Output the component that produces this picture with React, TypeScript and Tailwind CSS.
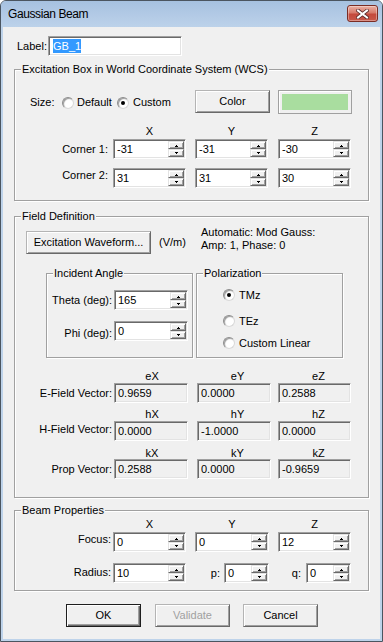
import React from "react";

const sunkenWhite =
  "bg-white border border-t-[#a0a0a0] border-l-[#a0a0a0] border-r-white border-b-white shadow-[inset_1px_1px_0_#696969,inset_-1px_-1px_0_#e3e3e3]";
const sunkenGray =
  "bg-[#f0f0f0] border border-t-[#a0a0a0] border-l-[#a0a0a0] border-r-white border-b-white shadow-[inset_1px_1px_0_#696969,inset_-1px_-1px_0_#e3e3e3]";
const raised =
  "bg-[#f0f0f0] border border-t-[#b4b4b4] border-l-[#b4b4b4] border-r-[#696969] border-b-[#696969] shadow-[inset_1px_1px_0_#fff,inset_-1px_-1px_0_#a0a0a0]";
const raisedDefault =
  "bg-[#f0f0f0] border border-[#1e1e1e] shadow-[inset_1px_1px_0_#fff,inset_-1px_-1px_0_#696969,inset_-2px_-2px_0_#a0a0a0]";

function Arrow({ up }: { up?: boolean }) {
  return (
    <svg width="5" height="3" viewBox="0 0 5 3" className="block">
      {up ? (
        <path d="M2 1h1v1h1v1H1V2h1z" fill="#000" />
      ) : (
        <path d="M1 0h3v1H3v1H2V1H1z" fill="#000" />
      )}
    </svg>
  );
}

function SpinBtn({ up }: { up?: boolean }) {
  return (
    <div className="h-[8px] w-[16px] flex items-center justify-center bg-[#f0f0f0] border border-t-[#e3e3e3] border-l-[#e3e3e3] border-r-[#696969] border-b-[#696969] shadow-[inset_1px_1px_0_#fff,inset_-1px_-1px_0_#a0a0a0]">
      <Arrow up={up} />
    </div>
  );
}

function Spin({ value, w }: { value: string; w: string }) {
  return (
    <div className={`flex h-[20px] ${w} ${sunkenWhite}`}>
      <div className="flex-1 flex items-center pl-[3px] leading-[13px]">{value}</div>
      <div className="flex flex-col py-[1px] pr-[1px]">
        <SpinBtn up />
        <SpinBtn />
      </div>
    </div>
  );
}

function ReadBox({ value, w }: { value: string; w: string }) {
  return (
    <div className={`flex items-center h-[20px] pl-[3px] leading-[13px] ${w} ${sunkenGray}`}>{value}</div>
  );
}

function Radio({ checked }: { checked?: boolean }) {
  return (
    <div className="w-[12px] h-[12px] shrink-0 rounded-full bg-white border border-t-[#8c8c8c] border-l-[#8c8c8c] border-r-[#d8d8d8] border-b-[#d8d8d8] shadow-[inset_1px_1px_1px_#9a9a9a] flex items-center justify-center">
      {checked && <div className="w-[4px] h-[4px] rounded-full bg-black" />}
    </div>
  );
}

function Group({
  title,
  className,
  children,
}: {
  title: string;
  className: string;
  children?: React.ReactNode;
}) {
  return (
    <div className={`border border-[#a0a0a0] shadow-[inset_1px_1px_0_#fff,1px_1px_0_#fff] ${className}`}>
      <div className="-mt-[7px] ml-[6px] px-[1px] w-fit bg-[#f0f0f0] leading-[13px] h-[13px]">{title}</div>
      {children}
    </div>
  );
}

function CloseIcon() {
  return (
    <svg width="13" height="10" viewBox="0 0 13 10" className="block">
      <path d="M2 1.5 L11 8.5 M11 1.5 L2 8.5" stroke="#5a2a2a" strokeWidth="3.6" strokeLinecap="square" />
      <path d="M2 1.5 L11 8.5 M11 1.5 L2 8.5" stroke="#ffffff" strokeWidth="2" strokeLinecap="square" />
    </svg>
  );
}

export default function App() {
  return (
    <div className="w-[383px] h-[642px] flex flex-col bg-[#bed3ea] border border-[#4b5560] rounded-t-[6px] overflow-hidden font-['Liberation_Sans',Arial,sans-serif] text-[11px] text-black">
      {/* Title bar */}
      <div className="h-[26px] shrink-0 flex items-center pl-[7px] pr-[4px] bg-[linear-gradient(to_bottom,#a6c1e0,#b4cbe6_60%,#bcd2ea)]">
        <div className="flex-1 text-[12px] tracking-[-0.4px] leading-[14px] text-black">Gaussian Beam</div>
        <div className="self-start mt-[4px] w-[31px] h-[17px] rounded-[3px] border border-[#7a2c24] bg-[linear-gradient(to_bottom,#eab0a3,#d77a6b_45%,#c4493c_55%,#c8584a)] shadow-[inset_0_0_0_1px_rgba(255,255,255,0.35)] flex items-center justify-center">
          <CloseIcon />
        </div>
      </div>

      {/* Client area */}
      <div className="flex-1 mx-[2px] mb-[2px] bg-[#f0f0f0] pl-[11px] pt-[9px] flex flex-col">
        {/* Label */}
        <div className="flex items-center h-[20px]">
          <span className="ml-[3px] w-[31px] leading-[13px]">Label:</span>
          <div className={`w-[134px] h-[20px] flex items-center pl-[4px] ${sunkenWhite}`}>
            <span className="bg-[#3399ff] text-white leading-[14px] h-[14px]">GB_1</span>
          </div>
        </div>

        {/* Excitation Box */}
        <Group title="Excitation Box in World Coordinate System (WCS)" className="mt-[13px] w-[355px] h-[132px] shrink-0">
          <div className="flex items-start mt-[14px] pl-[15px] h-[24px]">
            <div className="flex items-center h-[13px] mt-[6px] leading-[13px]">
              <span className="w-[32px]">Size:</span>
              <Radio />
              <span className="ml-[3px] w-[40px]">Default</span>
              <Radio checked />
              <span className="ml-[4px] w-[62px]">Custom</span>
            </div>
            <div className={`w-[75px] h-[23px] flex items-center justify-center leading-[13px] ${raised}`}>Color</div>
            <div className="ml-[8px] w-[74px] h-[24px] p-[3px] border border-[#a0a0a0] shadow-[inset_1px_1px_0_#fff]">
              <div className="w-full h-full bg-[#a9dd9f]" />
            </div>
          </div>
          <div className="flex h-[13px] leading-[13px] mt-[11px]">
            <div className="w-[98px]" />
            <div className="w-[73px] text-center">X</div>
            <div className="ml-[9px] w-[73px] text-center">Y</div>
            <div className="ml-[10px] w-[73px] text-center">Z</div>
          </div>
          <div className="flex items-center mt-[1px]">
            <div className="w-[98px] pr-[5px] text-right leading-[13px]">Corner 1:</div>
            <Spin value="-31" w="w-[73px]" />
            <div className="ml-[9px]"><Spin value="-31" w="w-[73px]" /></div>
            <div className="ml-[10px]"><Spin value="-30" w="w-[73px]" /></div>
          </div>
          <div className="flex items-center mt-[9px]">
            <div className="w-[98px] pr-[5px] text-right leading-[13px] mb-[6px]">Corner 2:</div>
            <Spin value="31" w="w-[73px]" />
            <div className="ml-[9px]"><Spin value="31" w="w-[73px]" /></div>
            <div className="ml-[10px]"><Spin value="30" w="w-[73px]" /></div>
          </div>
        </Group>

        {/* Field Definition */}
        <Group title="Field Definition" className="mt-[15px] w-[355px] h-[282px] shrink-0">
          <div className="flex items-start mt-[8px] h-[23px]">
            <div className={`ml-[11px] w-[125px] h-[23px] flex items-center justify-center leading-[13px] ${raised}`}>
              Excitation Waveform...
            </div>
            <div className="ml-[8px] w-[42px] mt-[5px] leading-[13px]">(V/m)</div>
            <div className="-mt-[5px] leading-[13px]">
              <div>Automatic: Mod Gauss:</div>
              <div>Amp: 1, Phase: 0</div>
            </div>
          </div>

          <div className="flex mt-[19px]">
            <Group title="Incident Angle" className="ml-[31px] w-[147px] h-[85px]">
              <div className="flex items-center mt-[10px]">
                <div className="w-[67px] pr-[2px] text-right leading-[13px]">Theta (deg):</div>
                <Spin value="165" w="w-[74px]" />
              </div>
              <div className="flex items-center mt-[11px]">
                <div className="w-[67px] pr-[2px] text-right leading-[13px] mt-[4px]">Phi (deg):</div>
                <Spin value="0" w="w-[74px]" />
              </div>
            </Group>
            <Group title="Polarization" className="ml-[3px] w-[147px] h-[85px]">
              <div className="flex items-center h-[14px] pl-[26px] mt-[8px] leading-[13px]">
                <Radio checked />
                <span className="ml-[4px]">TMz</span>
              </div>
              <div className="flex items-center h-[14px] pl-[26px] mt-[12px] leading-[13px]">
                <Radio />
                <span className="ml-[4px]">TEz</span>
              </div>
              <div className="flex items-center h-[14px] pl-[26px] mt-[8px] leading-[13px]">
                <Radio />
                <span className="ml-[4px]">Custom Linear</span>
              </div>
            </Group>
          </div>

          {/* Vectors */}
          <div className="flex h-[12px] leading-[12px] mt-[12px]">
            <div className="w-[99px]" />
            <div className="w-[74px] pl-[2px] text-center">eX</div>
            <div className="ml-[9px] w-[74px] pl-[7px] text-center">eY</div>
            <div className="ml-[7px] w-[73px] pl-[8px] text-center">eZ</div>
          </div>
          <div className="flex items-center mt-[1px]">
            <div className="w-[99px] pr-[2px] text-right leading-[13px]">E-Field Vector:</div>
            <ReadBox value="0.9659" w="w-[74px]" />
            <div className="ml-[9px]"><ReadBox value="0.0000" w="w-[74px]" /></div>
            <div className="ml-[7px]"><ReadBox value="0.2588" w="w-[73px]" /></div>
          </div>
          <div className="flex h-[12px] leading-[12px] mt-[5px]">
            <div className="w-[99px]" />
            <div className="w-[74px] pl-[2px] text-center">hX</div>
            <div className="ml-[9px] w-[74px] pl-[7px] text-center">hY</div>
            <div className="ml-[7px] w-[73px] pl-[8px] text-center">hZ</div>
          </div>
          <div className="flex items-center mt-[1px]">
            <div className="w-[99px] pr-[2px] text-right leading-[13px] mb-[4px]">H-Field Vector:</div>
            <ReadBox value="0.0000" w="w-[74px]" />
            <div className="ml-[9px]"><ReadBox value="-1.0000" w="w-[74px]" /></div>
            <div className="ml-[7px]"><ReadBox value="0.0000" w="w-[73px]" /></div>
          </div>
          <div className="flex h-[12px] leading-[12px] mt-[6px]">
            <div className="w-[99px]" />
            <div className="w-[74px] pl-[2px] text-center">kX</div>
            <div className="ml-[9px] w-[74px] pl-[7px] text-center">kY</div>
            <div className="ml-[7px] w-[73px] pl-[8px] text-center">kZ</div>
          </div>
          <div className="flex items-center">
            <div className="w-[99px] pr-[2px] text-right leading-[13px]">Prop Vector:</div>
            <ReadBox value="0.2588" w="w-[74px]" />
            <div className="ml-[9px]"><ReadBox value="0.0000" w="w-[74px]" /></div>
            <div className="ml-[7px]"><ReadBox value="-0.9659" w="w-[73px]" /></div>
          </div>
        </Group>

        {/* Beam Properties */}
        <Group title="Beam Properties" className="mt-[12px] w-[355px] h-[81px] shrink-0">
          <div className="flex h-[13px] leading-[13px] mt-[1px]">
            <div className="w-[98px]" />
            <div className="w-[73px] text-center">X</div>
            <div className="ml-[9px] w-[74px] text-center">Y</div>
            <div className="ml-[9px] w-[73px] text-center">Z</div>
          </div>
          <div className="flex items-center mt-[1px]">
            <div className="w-[98px] pr-[2px] text-right leading-[13px] mb-[5px]">Focus:</div>
            <Spin value="0" w="w-[73px]" />
            <div className="ml-[9px]"><Spin value="0" w="w-[74px]" /></div>
            <div className="ml-[9px]"><Spin value="12" w="w-[73px]" /></div>
          </div>
          <div className="flex items-center mt-[11px]">
            <div className="w-[98px] pr-[2px] text-right leading-[13px] mb-[2px]">Radius:</div>
            <Spin value="10" w="w-[73px]" />
            <div className="w-[38px] pr-[4px] text-right leading-[13px]">p:</div>
            <Spin value="0" w="w-[45px]" />
            <div className="w-[37px] pr-[5px] text-right leading-[13px]">q:</div>
            <Spin value="0" w="w-[45px]" />
          </div>
        </Group>

        {/* Buttons */}
        <div className="flex mt-[13px]">
          <div className={`ml-[52px] w-[75px] h-[23px] flex items-center justify-center leading-[13px] ${raisedDefault}`}>OK</div>
          <div className={`ml-[14px] w-[75px] h-[23px] flex items-center justify-center leading-[13px] text-[#a0a0a0] ${raised}`}>Validate</div>
          <div className={`ml-[13px] w-[75px] h-[23px] flex items-center justify-center leading-[13px] ${raised}`}>Cancel</div>
        </div>
      </div>
    </div>
  );
}
